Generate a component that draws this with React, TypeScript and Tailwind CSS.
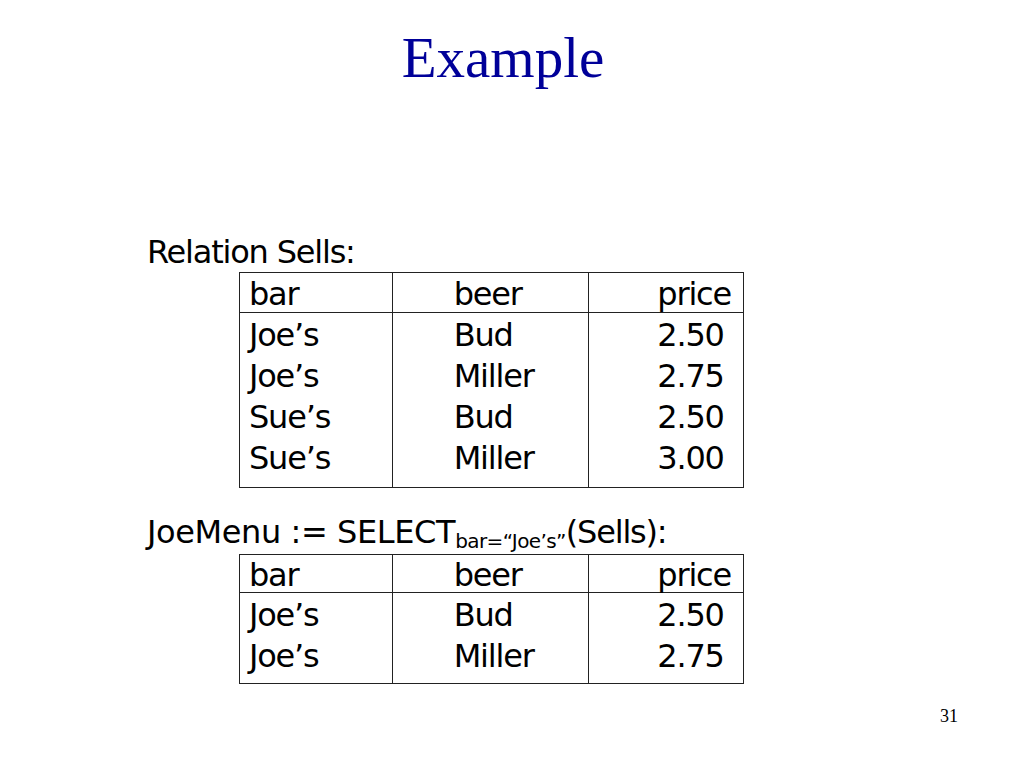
const sells = [
  ["Joe’s", "Bud", "2.50"],
  ["Joe’s", "Miller", "2.75"],
  ["Sue’s", "Bud", "2.50"],
  ["Sue’s", "Miller", "3.00"],
];

const joeMenu = sells.filter((row) => row[0] === "Joe’s");

function Relation({ rows, headerH, bottomPad }: { rows: string[][]; headerH: string; bottomPad: string }) {
  const cols = [
    { name: "bar", width: "w-[153px]", pad: "pl-[9px]" },
    { name: "beer", width: "w-[197px]", pad: "pl-[61px]" },
    { name: "price", width: "w-[154px]", pad: "pl-[68px]" },
  ];
  return (
    <div className="ml-[239px] flex w-[505px] border border-[#222]">
      {cols.map((col, ci) => (
        <div key={col.name} className={`flex flex-col ${col.width} ${ci < 2 ? "border-r border-[#222]" : ""} ${bottomPad}`}>
          <div className={`flex items-center border-b border-[#222] pt-[2px] ${headerH} ${col.pad}`}>{col.name}</div>
          {rows.map((row, ri) => (
            <div key={ri} className={`flex h-[41px] items-center pt-[2px] ${col.pad}`}>
              {row[ci]}
            </div>
          ))}
        </div>
      ))}
    </div>
  );
}

export default function App() {
  return (
    <div className="flex h-[768px] w-[1024px] flex-col bg-white text-black">
      <h1 className="pt-[22px] pr-[18px] text-center font-['Liberation_Serif','Times_New_Roman',serif] text-[57px] leading-[72px] text-[#000099]">
        Example
      </h1>

      <div className="mt-[140px] flex flex-col font-['DejaVu_Sans',sans-serif] text-[32px] leading-[36px] tracking-[-1.2px]">
        <p className="ml-[147px] h-[38px] whitespace-nowrap">Relation Sells:</p>
        <Relation rows={sells} headerH="h-[40px]" bottomPad="pb-[10px]" />

        <p className="ml-[147px] mt-[26px] h-[40px] whitespace-nowrap">
          <span className="tracking-[-0.4px]">JoeMenu := SELECT</span>
          <sub className="text-[20px] leading-none tracking-[-0.6px]">bar=“Joe’s”</sub>
          (Sells):
        </p>
        <Relation rows={joeMenu} headerH="h-[38px]" bottomPad="pb-[8px]" />
      </div>

      <div className="mt-auto flex justify-end pb-[38px] pr-[66px] font-['Liberation_Serif','Times_New_Roman',serif] text-[18px]">
        31
      </div>
    </div>
  );
}
